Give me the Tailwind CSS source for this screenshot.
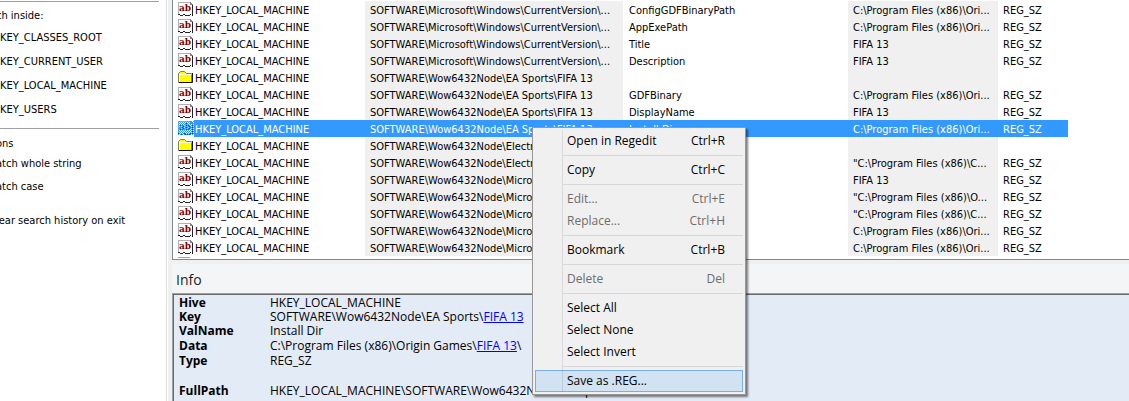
<!DOCTYPE html>
<html lang="en">
<head>
<meta charset="utf-8">
<title>Registry search</title>
<script src="https://cdn.jsdelivr.net/npm/@tailwindcss/browser@4"></script>
</head>
<body class="relative flex h-screen overflow-hidden bg-white font-['DejaVu_Sans_Condensed','DejaVu_Sans',sans-serif] text-[11px] text-black">

<svg class="absolute size-0" aria-hidden="true">
  <defs>
    <pattern id="dither-yellow" width="2" height="2" patternUnits="userSpaceOnUse"><path fill="#ffff00" d="M0 0h2v2H0z"/><path fill="#e8e8b0" d="M0 0h1v1H0zM1 1h1v1H1z"/></pattern>
    <pattern id="dither-blue" width="2" height="2" patternUnits="userSpaceOnUse"><path fill="#3399ff" d="M0 0h1v1H0zM1 1h1v1H1z"/></pattern>
  </defs>
  <symbol id="value" viewBox="0 0 16 16">
    <path fill="#fff" d="M0 1h12l3 3v10l-3 1H3l-3-2z"/>
    <path fill="none" stroke="#b0b0b0" d="M0 1.500h12M.5 1v12"/>
    <path fill="#808080" d="M12 1h1v1h1v1h1v1h-3z"/>
    <path fill="none" stroke="#222" d="M14.500 4v11"/>
    <path fill="none" stroke="#222" d="M0 13.500h2M2 14.500h3M5 13.500h2M7 14.500h2M9 14.500h3M12 13.500h1"/>
    <text x="1" y="10" font-family="DejaVu Serif, serif" font-weight="700" font-size="9" fill="#800000">ab</text>
  </symbol>
  <symbol id="folder" viewBox="0 0 16 16">
    <path fill="url(#dither-yellow)" stroke="#808060" d="M.5 13.500v-9l2-2h4l2 2h5v9z"/>
    <path fill="none" stroke="#ffffd8" d="M1.500 13V5.500h12"/>
    <path fill="none" stroke="#111" d="M1 13.500h13.500V4"/>
  </symbol>
  <symbol id="value-selected" viewBox="0 0 16 16">
    <use href="#value"/>
    <path fill="url(#dither-blue)" shape-rendering="crispEdges" d="M0 1h16v14H0z"/>
  </symbol>
</svg>

<aside class="w-[166px] shrink-0 overflow-hidden whitespace-nowrap pt-px">
  <div class="mr-[7px] border-t border-[#a0a0a0]"></div>
  <h2 class="-ml-1 mt-[6px] leading-4">ch inside:</h2>
  <div class="mt-[6px] flex flex-col gap-2 leading-4">
    <span>KEY_CLASSES_ROOT</span><span>KEY_CURRENT_USER</span><span>KEY_LOCAL_MACHINE</span><span>KEY_USERS</span>
  </div>
  <div class="mr-[7px] mt-[10px] border-t border-[#a0a0a0]"></div>
  <h2 class="-ml-1 mt-[7px] leading-4">ons</h2>
  <div class="-ml-1 mt-1 leading-4">atch whole string</div>
  <div class="-ml-1 mt-[7px] leading-4">atch case</div>
  <div class="-ml-1 mt-[18px] leading-4">lear search history on exit</div>
</aside>
<div class="flex w-[6px] shrink-0 border-l border-[#dcdcdc] bg-white pl-px"><div class="flex-1 bg-[#f0f0f0]"></div></div>

<main class="flex min-w-0 flex-1 flex-col">
  <section class="h-[260px] shrink-0 overflow-hidden border-b border-l border-[#828790] bg-white pt-px pl-[5px]">
    <table class="w-[890px] table-fixed border-collapse whitespace-nowrap">
      <colgroup><col class="w-4"><col class="w-[171px]"><col class="w-[258px]"><col class="w-[225px]"><col class="w-[150px]"><col class="w-[70px]"></colgroup>
      <tbody id="rows"></tbody>
    </table>
    <div class="mt-px h-px w-3 bg-[#a0a0a0]"></div>
  </section>
  <h2 class="flex h-[33px] shrink-0 items-center border-t-4 border-[#f0f0f0] bg-[#f4f5f7] pt-px pl-1 font-['Open_Sans',sans-serif] text-[14px] text-[#1e1e1e]">Info</h2>
  <section class="flex-1 border-t border-l border-[#a0a0a0]">
    <div class="h-full border-t border-l border-[#696969] bg-[#e3ebf7] pt-px pl-[5px] font-['Open_Sans',sans-serif] text-[12px]">
      <dl class="grid grid-cols-[91px_1fr] whitespace-nowrap leading-[14px] [&>dt]:font-bold">
        <dt>Hive</dt><dd>HKEY_LOCAL_MACHINE</dd>
        <dt>Key</dt><dd>SOFTWARE\Wow6432Node\EA Sports\<a href="#" class="text-[#0000ff] underline">FIFA 13</a></dd>
        <dt>ValName</dt><dd>Install Dir</dd>
        <dt class="pt-px">Data</dt><dd class="pt-px">C:\Program Files (x86)\Origin Games\<a href="#" class="text-[#0000ff] underline">FIFA 13</a>\</dd>
        <dt class="pt-px">Type</dt><dd class="pt-px">REG_SZ</dd>
        <dt class="pt-4">FullPath</dt><dd class="pt-4">HKEY_LOCAL_MACHINE\SOFTWARE\Wow6432Node\EA Sports\</dd>
      </dl>
    </div>
  </section>
</main>

<div role="menu" class="absolute top-[127px] left-[532px] w-[214px] border border-[#979797] bg-[#f0f0f0] p-[2px] font-['Open_Sans',sans-serif] text-[12px] shadow-[2px_2px_2px_#00000080]">
  <div class="relative flex flex-col [&>button]:flex [&>button]:h-[22px] [&>button]:items-center [&>button]:justify-between [&>button]:pr-[18px] [&>button]:pl-8 [&>hr]:my-[3px] [&>hr]:ml-7 [&>hr]:border-[#d7d7d7]">
    <button role="menuitem"><span>Open in Regedit</span><span>Ctrl+R</span></button>
    <hr>
    <button role="menuitem"><span>Copy</span><span>Ctrl+C</span></button>
    <hr>
    <button role="menuitem" disabled class="text-[#6d6d6d]"><span>Edit...</span><span>Ctrl+E</span></button>
    <button role="menuitem" disabled class="text-[#6d6d6d]"><span>Replace...</span><span>Ctrl+H</span></button>
    <hr>
    <button role="menuitem"><span>Bookmark</span><span>Ctrl+B</span></button>
    <hr>
    <button role="menuitem" disabled class="text-[#6d6d6d]"><span>Delete</span><span>Del</span></button>
    <hr>
    <button role="menuitem"><span>Select All</span></button>
    <button role="menuitem"><span>Select None</span></button>
    <button role="menuitem"><span>Select Invert</span></button>
    <hr>
    <button role="menuitem" class="bg-[#d1e2f2] outline outline-[#78aee5] -outline-offset-1"><span>Save as .REG...</span></button>
    <div class="absolute inset-y-0 left-[27px] w-px bg-[#00000018]"></div>
  </div>
</div>

<script>
const ms = 'SOFTWARE\\Microsoft\\Windows\\CurrentVersion\\...';
const ea = 'SOFTWARE\\Wow6432Node\\EA Sports\\FIFA 13';
const el = 'SOFTWARE\\Wow6432Node\\Electr';
const mi = 'SOFTWARE\\Wow6432Node\\Micro';
const ori = 'C:\\Program Files (x86)\\Ori...';
const c = '"C:\\Program Files (x86)\\C...';
const o = '"C:\\Program Files (x86)\\O...';
const rows = [
  [ms, 'ConfigGDFBinaryPath', ori], [ms, 'AppExePath', ori], [ms, 'Title', 'FIFA 13'], [ms, 'Description', 'FIFA 13'],
  [ea], [ea, 'GDFBinary', ori], [ea, 'DisplayName', 'FIFA 13'], [ea, 'Install Dir', ori],
  [el], [el, '', c], [mi, '', 'FIFA 13'], [mi, '', o], [mi, '', c], [mi, '', ori], [mi, '', ori]
];
document.getElementById('rows').innerHTML = rows.map((r, i) => {
  const on = i === 7, shade = on ? '' : 'bg-[#f0f0f0]';
  const icon = on ? 'value-selected' : r.length > 1 ? 'value' : 'folder';
  const type = r.length > 1 ? 'REG_SZ' : '';
  return `<tr class="h-[17px] leading-[15px] ${on ? 'bg-[#3399ff] text-white' : ''}">
    <td class="bg-white p-0 align-top"><svg class="block size-4"><use href="#${icon}"/></svg></td>
    <td class="p-0 pt-[2px] pl-px">HKEY_LOCAL_MACHINE</td>
    <td class="p-0 pt-[2px] pl-[5px] ${shade}">${r[0]}</td>
    <td class="p-0 pt-[2px] pl-[6px]">${r[1] || ''}</td>
    <td class="p-0 pt-[2px] pl-[5px] ${shade}">${r[2] || ''}</td>
    <td class="p-0 pt-[2px] pl-[5px]">${type}</td></tr>`;
}).join('');
</script>
</body>
</html>
